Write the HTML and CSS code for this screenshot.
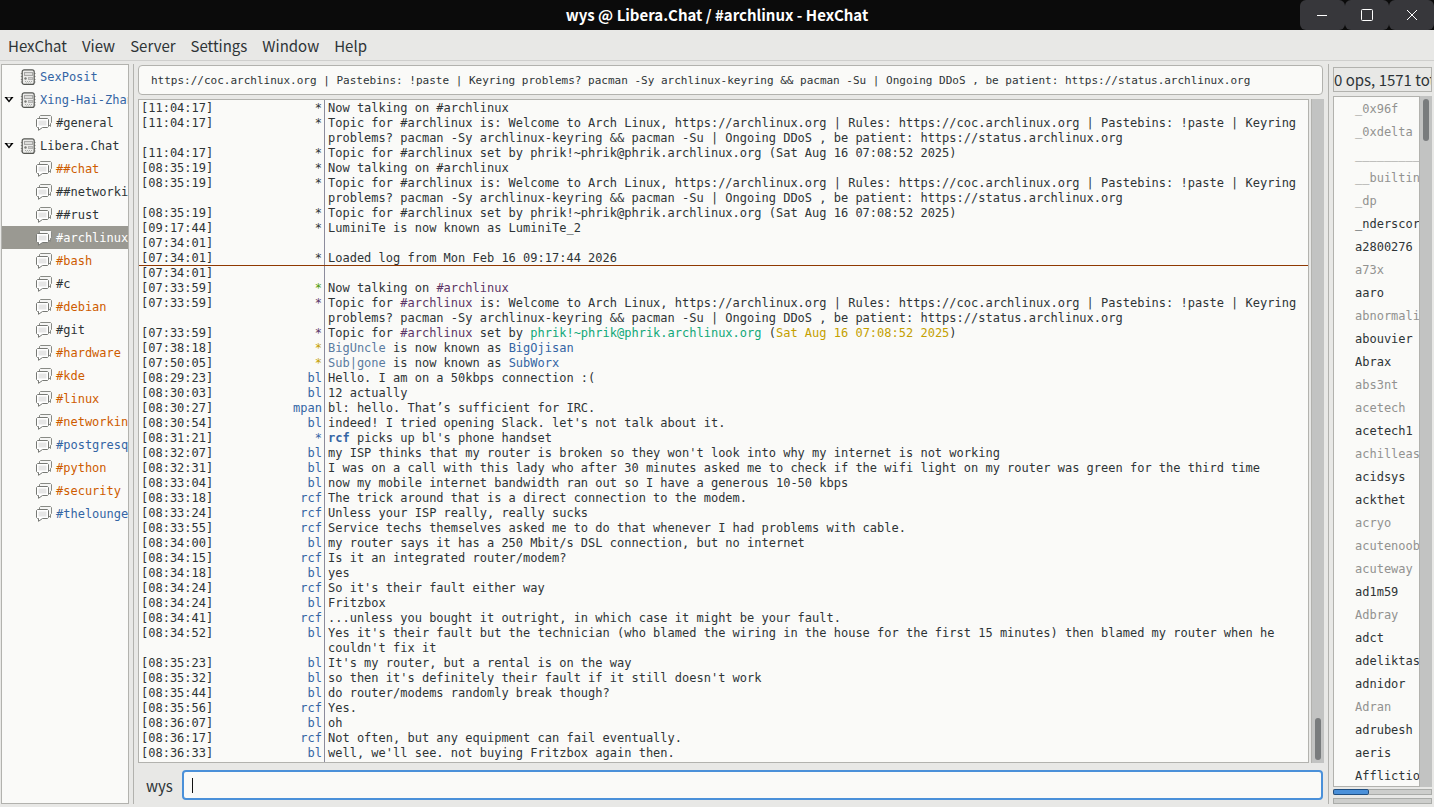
FILE: index.html
```html
<!DOCTYPE html>
<html lang="en">

<head>
    <meta charset="UTF-8">
    <meta name="viewport" content="width=device-width, initial-scale=1.0">
    <title>wys @ Libera.Chat / #archlinux - HexChat</title>
    <link rel="stylesheet" href="styles.css">
</head>

<body>
    <svg class="sprite" aria-hidden="true">
        <symbol id="icon-server" viewBox="0 0 16 16">
            <path d="M.8 4.500h14.800M.8 7.500h14.800M.8 10.500h14.800M.8 13h14.800" stroke="#9a9a98"/>
            <rect x="2.200" y=".8" width="12" height="14.600" rx="2" fill="#ececea" stroke="#555753" stroke-width="1.200"/>
            <rect x="4.500" y="3.500" width="8" height="3" fill="#dcdcda" stroke="#a8a8a6"/>
            <rect x="8.500" y="8.500" width="4" height="2" fill="#ccc" stroke="#b4b4b2"/>
            <circle cx="5.500" cy="9.500" r="1.200" fill="#777975"/>
            <path d="M5 12.500h8M6 14h6" stroke="#aaaca8" stroke-dasharray="1 1"/>
        </symbol>
        <symbol id="icon-chat" viewBox="0 0 16 16">
            <path d="M3.500 3.500V1.500l1-1h10l1 1v6l-1 1v3l-2-2" fill="#f6f6f5" stroke="#888a85"/>
            <path d="M1.500 3.500h10l1 1v7l-1 1H6.500L2.500 15.300v-2.800h-1l-1-1v-7z" fill="#fff" stroke="#777975"/>
            <path d="M2.500 5.500h8v5h-8z" fill="#e6e6e6"/>
        </symbol>
    </svg>

    <header class="titlebar">
        <h1>wys @ Libera.Chat / #archlinux - HexChat</h1>
        <div class="window-buttons">
            <button aria-label="Minimize"><svg width="14" height="14"><path d="M2 7.500h10"/></svg></button>
            <button aria-label="Maximize"><svg width="14" height="14"><rect x="1.500" y="1.500" width="11" height="11" rx="1"/></svg></button>
            <button aria-label="Close"><svg width="14" height="14"><path d="M2 2l10 10M12 2L2 12"/></svg></button>
        </div>
    </header>

    <nav class="menubar">
        <a href="#">HexChat</a>
        <a href="#">View</a>
        <a href="#">Server</a>
        <a href="#">Settings</a>
        <a href="#">Window</a>
        <a href="#">Help</a>
    </nav>

    <main class="panes">
        <ul class="tree">
            <li class="server data"><a href="#"><svg><use href="#icon-server"/></svg>SexPosit</a></li>
            <li class="server data open"><a href="#"><svg><use href="#icon-server"/></svg>Xing-Hai-Zhan</a></li>
            <li><a href="#"><svg><use href="#icon-chat"/></svg>#general</a></li>
            <li class="server open"><a href="#"><svg><use href="#icon-server"/></svg>Libera.Chat</a></li>
            <li class="message"><a href="#"><svg><use href="#icon-chat"/></svg>##chat</a></li>
            <li><a href="#"><svg><use href="#icon-chat"/></svg>##networking</a></li>
            <li><a href="#"><svg><use href="#icon-chat"/></svg>##rust</a></li>
            <li class="selected"><a href="#"><svg><use href="#icon-chat"/></svg>#archlinux</a></li>
            <li class="message"><a href="#"><svg><use href="#icon-chat"/></svg>#bash</a></li>
            <li><a href="#"><svg><use href="#icon-chat"/></svg>#c</a></li>
            <li class="message"><a href="#"><svg><use href="#icon-chat"/></svg>#debian</a></li>
            <li><a href="#"><svg><use href="#icon-chat"/></svg>#git</a></li>
            <li class="message"><a href="#"><svg><use href="#icon-chat"/></svg>#hardware</a></li>
            <li class="message"><a href="#"><svg><use href="#icon-chat"/></svg>#kde</a></li>
            <li class="message"><a href="#"><svg><use href="#icon-chat"/></svg>#linux</a></li>
            <li class="message"><a href="#"><svg><use href="#icon-chat"/></svg>#networking</a></li>
            <li class="data"><a href="#"><svg><use href="#icon-chat"/></svg>#postgresql</a></li>
            <li class="message"><a href="#"><svg><use href="#icon-chat"/></svg>#python</a></li>
            <li class="message"><a href="#"><svg><use href="#icon-chat"/></svg>#security</a></li>
            <li class="data"><a href="#"><svg><use href="#icon-chat"/></svg>#thelounge</a></li>
        </ul>

        <section class="chat">
            <input class="topic" type="text" aria-label="Topic" value="https://coc.archlinux.org | Pastebins: !paste | Keyring problems? pacman -Sy archlinux-keyring &amp;&amp; pacman -Su | Ongoing DDoS , be patient: https://status.archlinux.org">
            <div class="log-area">
                <div class="log">
                    <table>
                        <tr><td>[11:04:17]</td><td>*</td><td>Now talking on #archlinux</td></tr>
                        <tr><td>[11:04:17]</td><td>*</td><td>Topic for #archlinux is: Welcome to Arch Linux, https://archlinux.org | Rules: https://coc.archlinux.org | Pastebins: !paste | Keyring problems? pacman -Sy archlinux-keyring &amp;&amp; pacman -Su | Ongoing DDoS , be patient: https://status.archlinux.org</td></tr>
                        <tr><td>[11:04:17]</td><td>*</td><td>Topic for #archlinux set by phrik!~phrik@phrik.archlinux.org (Sat Aug 16 07:08:52 2025)</td></tr>
                        <tr><td>[08:35:19]</td><td>*</td><td>Now talking on #archlinux</td></tr>
                        <tr><td>[08:35:19]</td><td>*</td><td>Topic for #archlinux is: Welcome to Arch Linux, https://archlinux.org | Rules: https://coc.archlinux.org | Pastebins: !paste | Keyring problems? pacman -Sy archlinux-keyring &amp;&amp; pacman -Su | Ongoing DDoS , be patient: https://status.archlinux.org</td></tr>
                        <tr><td>[08:35:19]</td><td>*</td><td>Topic for #archlinux set by phrik!~phrik@phrik.archlinux.org (Sat Aug 16 07:08:52 2025)</td></tr>
                        <tr><td>[09:17:44]</td><td>*</td><td>LuminiTe is now known as LuminiTe_2</td></tr>
                        <tr><td>[07:34:01]</td><td></td><td></td></tr>
                        <tr class="marker"><td>[07:34:01]</td><td>*</td><td>Loaded log from Mon Feb 16 09:17:44 2026</td></tr>
                        <tr><td>[07:34:01]</td><td></td><td></td></tr>
                        <tr><td>[07:33:59]</td><td class="green">*</td><td>Now talking on <span class="purple">#archlinux</span></td></tr>
                        <tr><td>[07:33:59]</td><td class="purple">*</td><td>Topic for <span class="purple">#archlinux</span> is: Welcome to Arch Linux, https://archlinux.org | Rules: https://coc.archlinux.org | Pastebins: !paste | Keyring problems? pacman -Sy archlinux-keyring &amp;&amp; pacman -Su | Ongoing DDoS , be patient: https://status.archlinux.org</td></tr>
                        <tr><td>[07:33:59]</td><td class="purple">*</td><td>Topic for <span class="purple">#archlinux</span> set by <span class="teal">phrik!~phrik@phrik.archlinux.org</span> (<span class="yellow">Sat Aug 16 07:08:52 2025</span>)</td></tr>
                        <tr><td>[07:38:18]</td><td class="yellow">*</td><td><span class="slate">BigUncle</span> is now known as <span class="blue">BigOjisan</span></td></tr>
                        <tr><td>[07:50:05]</td><td class="yellow">*</td><td><span class="slate">Sub|gone</span> is now known as <span class="blue">SubWorx</span></td></tr>
                        <tr><td>[08:29:23]</td><td class="blue">bl</td><td>Hello. I am on a 50kbps connection :(</td></tr>
                        <tr><td>[08:30:03]</td><td class="blue">bl</td><td>12 actually</td></tr>
                        <tr><td>[08:30:27]</td><td class="blue">mpan</td><td>bl: hello. That’s sufficient for IRC.</td></tr>
                        <tr><td>[08:30:54]</td><td class="blue">bl</td><td>indeed! I tried opening Slack. let's not talk about it.</td></tr>
                        <tr><td>[08:31:21]</td><td class="blue">*</td><td><b class="blue">rcf</b> picks up bl's phone handset</td></tr>
                        <tr><td>[08:32:07]</td><td class="blue">bl</td><td>my ISP thinks that my router is broken so they won't look into why my internet is not working</td></tr>
                        <tr><td>[08:32:31]</td><td class="blue">bl</td><td>I was on a call with this lady who after 30 minutes asked me to check if the wifi light on my router was green for the third time</td></tr>
                        <tr><td>[08:33:04]</td><td class="blue">bl</td><td>now my mobile internet bandwidth ran out so I have a generous 10-50 kbps</td></tr>
                        <tr><td>[08:33:18]</td><td class="blue">rcf</td><td>The trick around that is a direct connection to the modem.</td></tr>
                        <tr><td>[08:33:24]</td><td class="blue">rcf</td><td>Unless your ISP really, really sucks</td></tr>
                        <tr><td>[08:33:55]</td><td class="blue">rcf</td><td>Service techs themselves asked me to do that whenever I had problems with cable.</td></tr>
                        <tr><td>[08:34:00]</td><td class="blue">bl</td><td>my router says it has a 250 Mbit/s DSL connection, but no internet</td></tr>
                        <tr><td>[08:34:15]</td><td class="blue">rcf</td><td>Is it an integrated router/modem?</td></tr>
                        <tr><td>[08:34:18]</td><td class="blue">bl</td><td>yes</td></tr>
                        <tr><td>[08:34:24]</td><td class="blue">rcf</td><td>So it's their fault either way</td></tr>
                        <tr><td>[08:34:24]</td><td class="blue">bl</td><td>Fritzbox</td></tr>
                        <tr><td>[08:34:41]</td><td class="blue">rcf</td><td>...unless you bought it outright, in which case it might be your fault.</td></tr>
                        <tr><td>[08:34:52]</td><td class="blue">bl</td><td>Yes it's their fault but the technician (who blamed the wiring in the house for the first 15 minutes) then blamed my router when he couldn't fix it</td></tr>
                        <tr><td>[08:35:23]</td><td class="blue">bl</td><td>It's my router, but a rental is on the way</td></tr>
                        <tr><td>[08:35:32]</td><td class="blue">bl</td><td>so then it's definitely their fault if it still doesn't work</td></tr>
                        <tr><td>[08:35:44]</td><td class="blue">bl</td><td>do router/modems randomly break though?</td></tr>
                        <tr><td>[08:35:56]</td><td class="blue">rcf</td><td>Yes.</td></tr>
                        <tr><td>[08:36:07]</td><td class="blue">bl</td><td>oh</td></tr>
                        <tr><td>[08:36:17]</td><td class="blue">rcf</td><td>Not often, but any equipment can fail eventually.</td></tr>
                        <tr><td>[08:36:33]</td><td class="blue">bl</td><td>well, we'll see. not buying Fritzbox again then.</td></tr>
                    </table>
                </div>
                <div class="scrollbar at-end"><div class="thumb"></div></div>
            </div>
            <form class="entry">
                <label for="message">wys</label>
                <input type="text" id="message" autocomplete="off">
            </form>
        </section>

        <aside class="users">
            <div class="user-count">0 ops, 1571 total</div>
            <div class="user-area">
                <ul class="user-list">
                    <li class="away">_0x96f</li>
                    <li class="away">_0xdelta</li>
                    <li class="away">__________</li>
                    <li class="away">__builtin</li>
                    <li class="away">_dp</li>
                    <li>_nderscore</li>
                    <li>a2800276</li>
                    <li class="away">a73x</li>
                    <li>aaro</li>
                    <li class="away">abnormalis</li>
                    <li>abouvier</li>
                    <li>Abrax</li>
                    <li class="away">abs3nt</li>
                    <li class="away">acetech</li>
                    <li>acetech1</li>
                    <li class="away">achilleas</li>
                    <li>acidsys</li>
                    <li>ackthet</li>
                    <li class="away">acryo</li>
                    <li class="away">acutenoob</li>
                    <li class="away">acuteway</li>
                    <li>ad1m59</li>
                    <li class="away">Adbray</li>
                    <li>adct</li>
                    <li>adeliktas</li>
                    <li>adnidor</li>
                    <li class="away">Adran</li>
                    <li>adrubesh</li>
                    <li>aeris</li>
                    <li>Affliction</li>
                </ul>
                <div class="scrollbar"><div class="thumb"></div></div>
            </div>
            <div class="meter"><div class="level"></div></div>
            <div class="meter"></div>
        </aside>
    </main>
</body>

</html>
```
FILE: styles.css
```css
* {
    box-sizing: border-box;
}

body {
    margin: 0;
    height: 100vh;
    display: flex;
    flex-direction: column;
    overflow: hidden;
    background-color: #e8e8e6;
    color: #2e3436;
    font-family: "Noto Sans CJK SC", "Noto Sans", sans-serif;
    font-size: 15px;
}

a {
    color: inherit;
    text-decoration: none;
}

ul {
    list-style: none;
    margin: 0;
    padding: 0;
}

.sprite {
    display: none;
}

.titlebar {
    display: grid;
    grid-template-columns: 134px 1fr 134px;
    flex: none;
    height: 30px;
    background-color: #0b0b0b;
    color: #fff;
}

.titlebar h1 {
    grid-column: 2;
    margin: 0;
    font-size: 15px;
    line-height: 30px;
    text-align: center;
}

.window-buttons {
    display: grid;
    grid-template-columns: repeat(3, 1fr);
}

.window-buttons button {
    padding: 0;
    border: none;
    border-radius: 6px;
    background-color: #37373b;
    height: 30px;
}

.window-buttons svg {
    display: block;
    margin: 0 auto;
    fill: none;
    stroke: #fff;
}

.menubar {
    display: flex;
    flex: none;
    gap: 15px;
    height: 31px;
    padding: 0 8px;
    border-bottom: 1px solid #cfcfcd;
    line-height: 32px;
}

.panes {
    flex: 1;
    min-height: 0;
    display: grid;
    grid-template-columns: 128px 1fr 104px;
    gap: 4px;
    padding: 3px 2px 3px 1px;
}

.tree,
.log,
.user-list {
    background-color: #fafaf8;
    border: 1px solid #b2b2ae;
    overflow: hidden;
    font-family: "DejaVu Sans Mono", monospace;
    font-size: 12px;
}

.tree a {
    display: flex;
    align-items: center;
    height: 23px;
    padding-left: 34px;
    gap: 4px;
    white-space: nowrap;
}

.tree svg {
    flex: none;
    width: 16px;
    height: 16px;
}

.tree .server a {
    padding-left: 18px;
}

.tree .open a {
    padding-left: 2px;
}

/* expander arrow */
.tree .open a::before {
    content: "";
    flex: none;
    width: 12px;
    height: 6px;
    background-color: #000;
    clip-path: polygon(evenodd, 0 0, 10px 0, 5px 6px, 0 0, 3px 1px, 7px 1px, 5px 4px, 3px 1px);
}

.data,
.blue {
    color: #3465a4;
}

.message {
    color: #ce5c00;
}

.tree .selected {
    background-color: #9a9992;
    color: #fff;
}

.chat {
    display: flex;
    flex-direction: column;
    min-width: 0;
    min-height: 0;
    padding: 1px 0 0 4px;
    border-left: 1px solid #b2b2ae;
}

input {
    color: inherit;
    background-color: #fafaf8;
    border: 1px solid #b2b2ae;
    border-radius: 4px;
    outline: none;
    font-family: "DejaVu Sans Mono", monospace;
    font-size: 12px;
}

.topic {
    height: 30px;
    padding: 0 8px 0 12px;
    margin-right: 1px;
    font-size: 11px;
}

.log-area {
    flex: 1;
    min-height: 0;
    display: flex;
    gap: 2px;
    margin-top: 4px;
}

.log {
    flex: 1;
    min-width: 0;
    padding-top: 1px;
    /* line between nicks and messages */
    background-image: linear-gradient(#8c8c9c, #8c8c9c);
    background-position: 185px 0;
    background-size: 1px 100%;
    background-repeat: no-repeat;
}

.log table {
    width: 100%;
    border-spacing: 0;
    table-layout: fixed;
    line-height: 15px;
}

.log td {
    padding: 0 3px;
    height: 15px;
    vertical-align: top;
}

.log td:nth-child(1) {
    width: 92px;
    padding-left: 2px;
}

.log td:nth-child(2) {
    width: 94px;
    text-align: right;
}

.marker {
    background: linear-gradient(#8f3902, #8f3902) bottom / 100% 1px no-repeat;
}

.green {
    color: #4e9a06;
}

.purple {
    color: #5c3566;
}

.teal {
    color: #11a879;
}

.yellow {
    color: #c4a000;
}

.slate {
    color: #5a7ba0;
}

.scrollbar {
    display: flex;
    justify-content: center;
    width: 13px;
    padding: 3px 0;
    background-color: #c2c3c2;
    border-left: 1px solid #b2b2ae;
}

.scrollbar.at-end {
    align-items: flex-end;
}

.thumb {
    width: 6px;
    height: 42px;
    border-radius: 3px;
    background-color: #797c7d;
}

.entry {
    display: flex;
    align-items: center;
    gap: 9px;
    margin: 7px 1px 4px 8px;
}

.entry input {
    flex: 1;
    min-width: 0;
    height: 30px;
    padding: 0 8px;
    border: 2px solid #4a90d9;
    /* text cursor */
    background-image: linear-gradient(#111, #111);
    background-position: 8px center;
    background-size: 1px 15px;
    background-repeat: no-repeat;
}

.users {
    display: flex;
    flex-direction: column;
    min-width: 0;
    min-height: 0;
    padding: 3px 0 0 4px;
    border-left: 1px solid #b2b2ae;
}

.user-count {
    height: 25px;
    border: 1px solid #b2b2ae;
    overflow: hidden;
    white-space: nowrap;
    line-height: 24px;
}

.user-area {
    flex: 1;
    min-height: 0;
    display: flex;
    margin: 4px 0 2px;
}

.user-list {
    flex: 1;
    min-width: 0;
    padding-top: 1px;
    border-right: none;
}

.user-list li {
    padding-left: 21px;
    line-height: 23px;
    white-space: nowrap;
}

.user-list .away {
    color: #929290;
}

.meter {
    flex: none;
    height: 6px;
    margin-bottom: 3px;
    border: 1px solid #aaaca9;
    background-color: #cdcecc;
}

.meter:last-child {
    margin-bottom: 0;
}

.level {
    width: 35%;
    height: 100%;
    background-color: #4a90d9;
    outline: 1px solid #1f4e80;
    border-radius: 1px;
}
```
